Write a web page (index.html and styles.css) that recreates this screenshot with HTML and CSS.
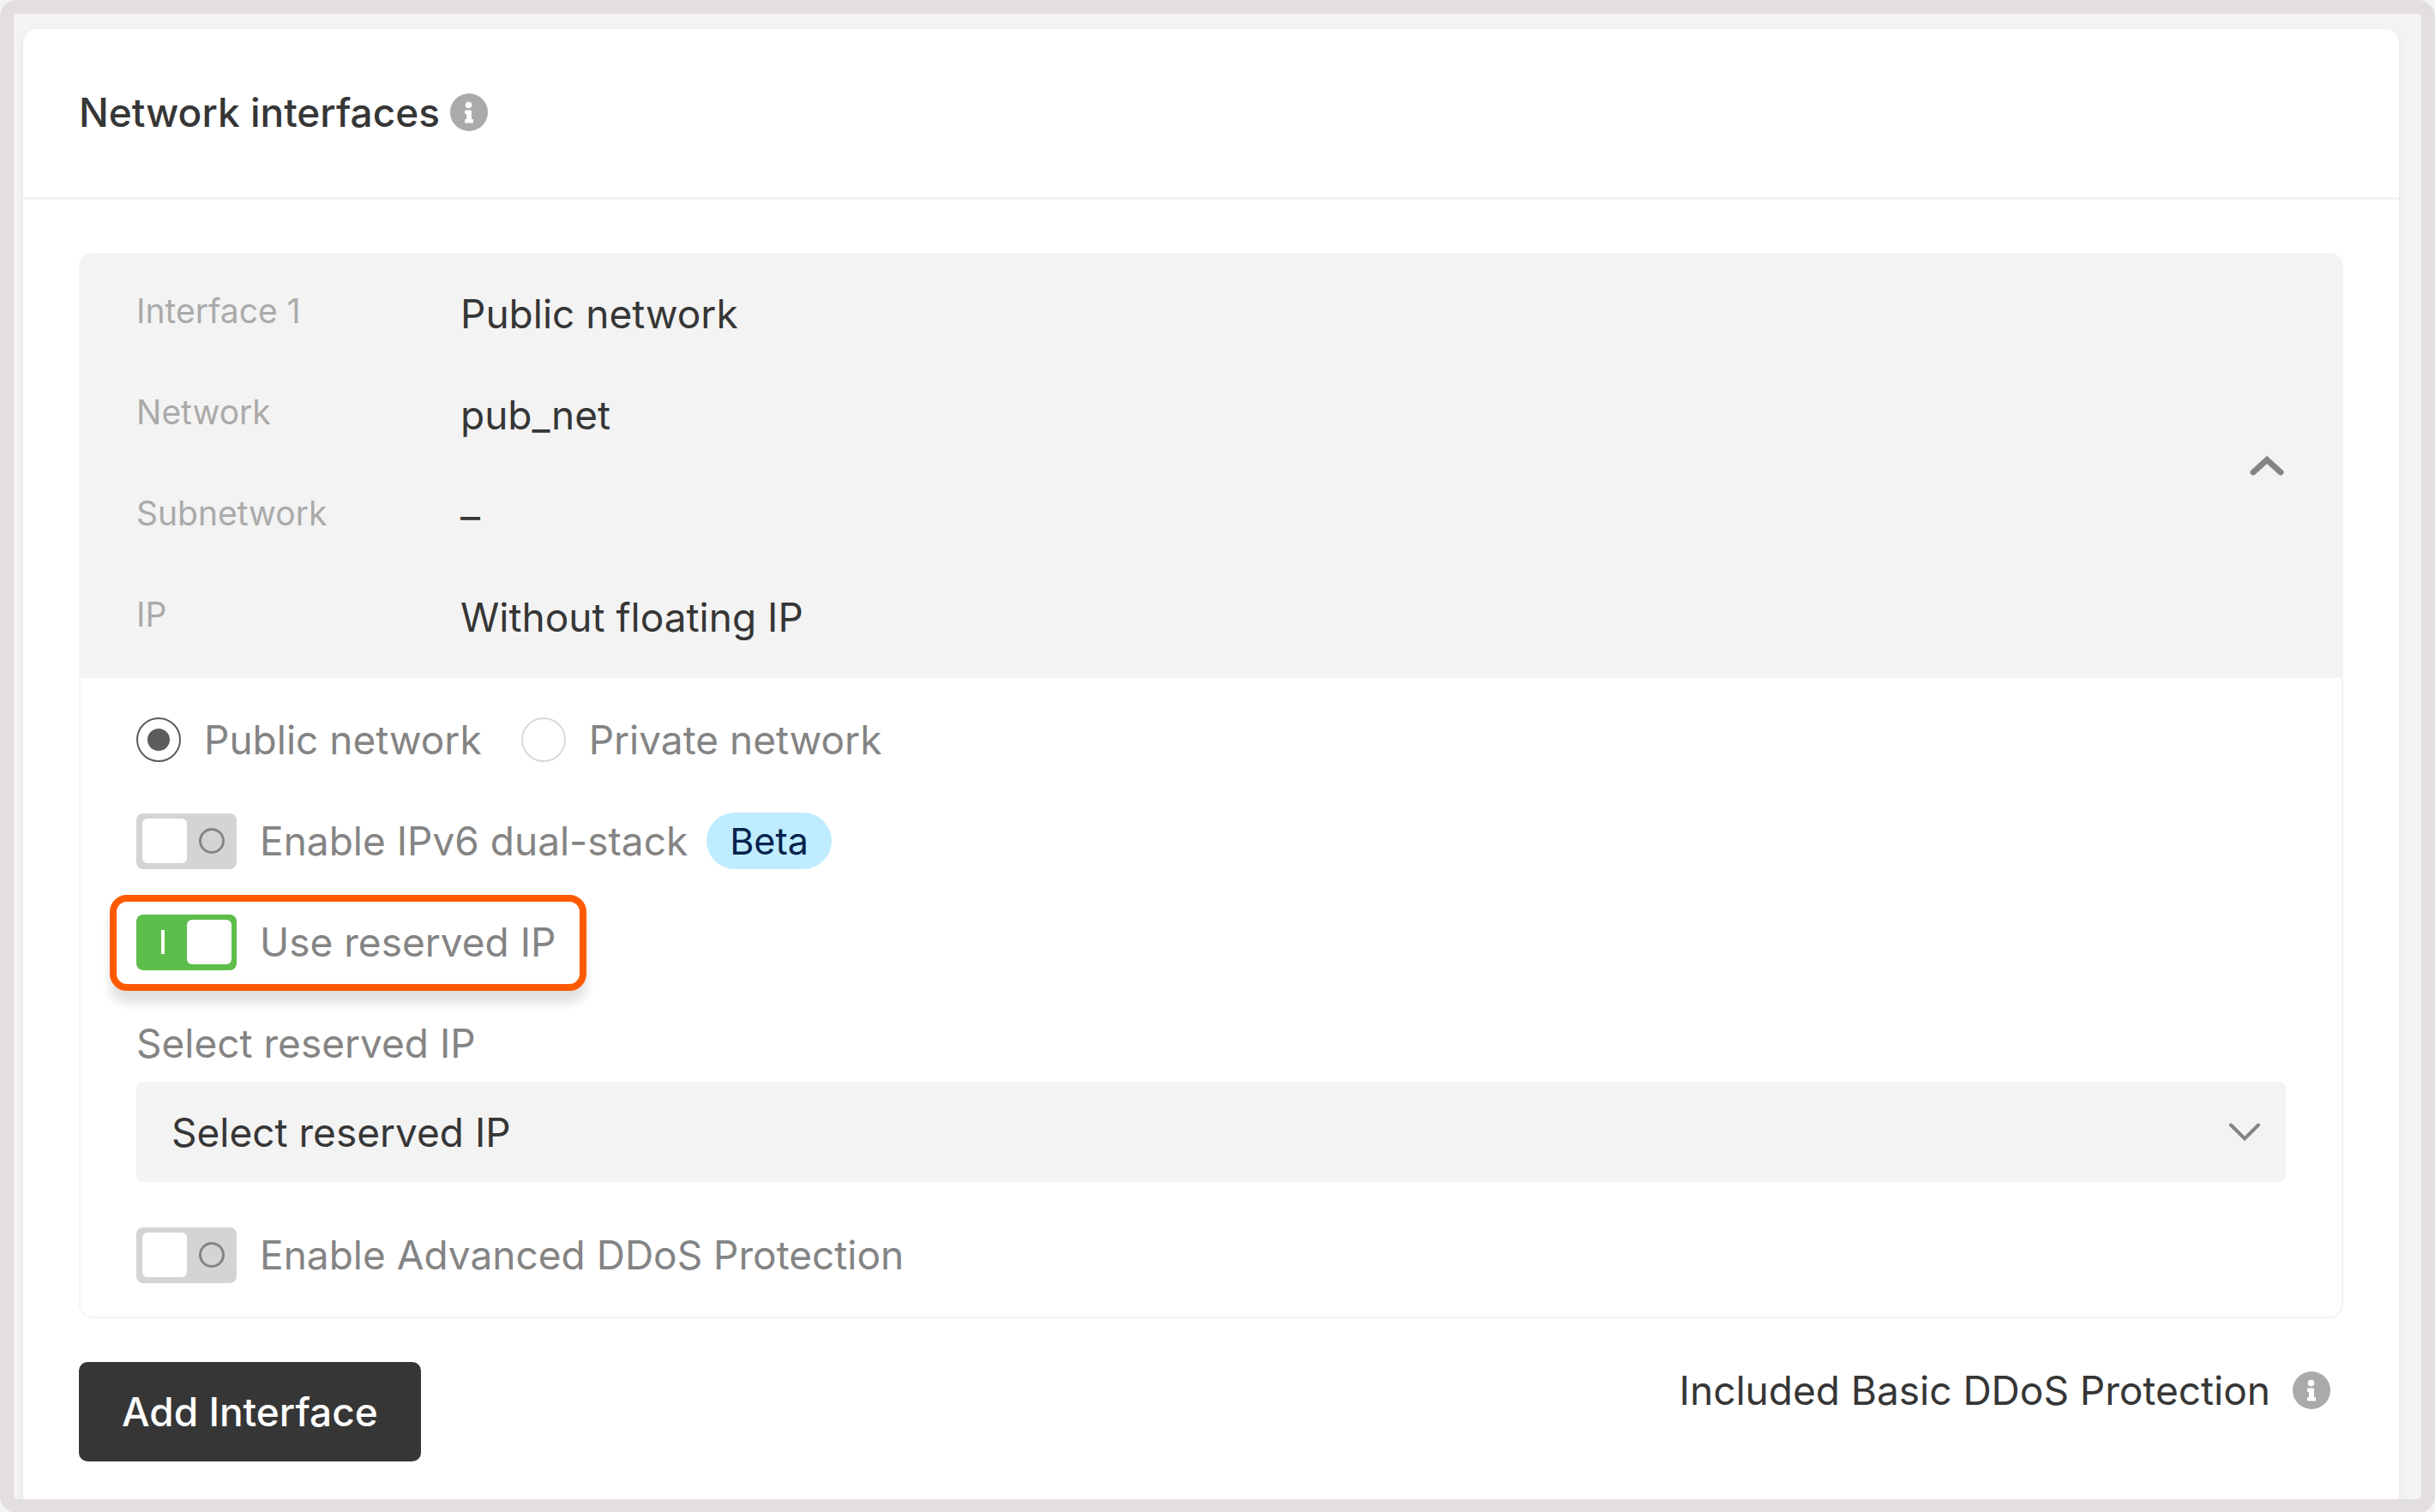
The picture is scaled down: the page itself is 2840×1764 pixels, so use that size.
FILE: index.html
```html
<!DOCTYPE html>
<html lang="en">
<head>
<meta charset="utf-8">
<meta name="viewport" content="width=device-width, initial-scale=1">
<title>Network interfaces</title>
<link rel="stylesheet" href="styles.css">
</head>
<body>
<svg class="sprite" aria-hidden="true">
  <symbol id="info" viewBox="0 0 44 44">
    <circle cx="22" cy="22" r="22" fill="#aaaaaa"/>
    <circle cx="21.500" cy="13.500" r="3.800" fill="#fff"/>
    <path d="M17.500 20h7v10.500h2v3.500h-9v-3.500h2v-7h-2z" fill="#fff" stroke="#fff" stroke-width="1" stroke-linejoin="round"/>
  </symbol>
</svg>
<div class="frame">
  <main class="card">
    <header class="card-header">
      <h1 class="title">Network interfaces</h1>
      <button class="icon-button" type="button" aria-label="About network interfaces"><svg class="info-icon"><use href="#info"/></svg></button>
    </header>
    <form class="card-body">
      <section class="panel">
        <div class="summary">
          <dl class="details">
            <dt>Interface 1</dt><dd>Public network</dd>
            <dt>Network</dt><dd>pub_net</dd>
            <dt>Subnetwork</dt><dd>–</dd>
            <dt>IP</dt><dd>Without floating IP</dd>
          </dl>
          <button class="icon-button" type="button" aria-label="Collapse interface" aria-expanded="true">
            <svg class="collapse-icon" viewBox="0 0 40 26"><path d="M4 21 20 6.500 36 21" fill="none" stroke="#848484" stroke-width="7" stroke-linecap="round" stroke-linejoin="miter"/></svg>
          </button>
        </div>
        <div class="settings">
          <div class="row radios">
            <label class="option"><input class="radio" type="radio" name="net" checked>Public network</label>
            <label class="option"><input class="radio" type="radio" name="net">Private network</label>
          </div>
          <div class="row">
            <label class="toggle"><input class="switch" type="checkbox" role="switch">Enable IPv6 dual-stack</label>
            <span class="badge">Beta</span>
          </div>
          <div class="row">
            <label class="toggle highlighted"><input class="switch" type="checkbox" role="switch" checked>Use reserved IP</label>
          </div>
          <div class="field">
            <label class="row" for="reserved-ip">Select reserved IP</label>
            <div class="select-box">
              <select class="select" id="reserved-ip"><option>Select reserved IP</option></select>
              <svg class="select-arrow" viewBox="0 0 36 22" aria-hidden="true"><path d="M2 2.500 18 18.500 34 2.500" fill="none" stroke="#848484" stroke-width="4" stroke-linecap="round"/></svg>
            </div>
          </div>
          <div class="row">
            <label class="toggle"><input class="switch" type="checkbox" role="switch">Enable Advanced DDoS Protection</label>
          </div>
        </div>
      </section>
      <div class="actions">
        <button class="add-button" type="button">Add Interface</button>
        <div class="included">
          <span>Included Basic DDoS Protection</span>
          <button class="icon-button" type="button" aria-label="About basic DDoS protection"><svg class="info-icon"><use href="#info"/></svg></button>
        </div>
      </div>
    </form>
  </main>
</div>
</body>
</html>
```
FILE: styles.css
```css
*,
*::before,
*::after {
  box-sizing: border-box;
}

body {
  margin: 0;
  background: #f3f3f3;
  color: #363636;
  font-family: Inter, "Liberation Sans", sans-serif;
  font-size: 46px;
  line-height: 66px;
}

button,
select {
  font: inherit;
  color: inherit;
}

.sprite {
  position: absolute;
  width: 0;
  height: 0;
}

.frame {
  display: flex;
  flex-direction: column;
  min-height: 100vh;
  padding: 18px 26px 0 11px;
  border: 16px solid #e3dfde;
  border-radius: 20px;
}

.card {
  flex: 1;
  background: #fff;
  border-radius: 16px 16px 0 0;
  box-shadow: 0 4px 12px rgba(0, 0, 0, 0.06);
  clip-path: inset(-16px -24px 0 -11px);
}

.card-header {
  display: flex;
  align-items: center;
  gap: 12px;
  padding: 64px 65px 66px;
  border-bottom: 3px solid #f3f3f3;
}

.title {
  margin: 0;
  font-size: inherit;
  font-weight: 500;
}

.icon-button {
  display: flex;
  padding: 0;
  border: 0;
  background: none;
  cursor: pointer;
}

.info-icon {
  width: 44px;
  height: 44px;
}

.card-body {
  padding: 62px 65px 44px;
}

.panel {
  border: 2px solid #f3f3f3;
  border-radius: 16px;
}

.summary {
  display: flex;
  align-items: center;
  justify-content: space-between;
  padding: 36px 67px 38px 65px;
  background: #f3f3f3;
  border-radius: 14px 14px 0 0;
}

.details {
  display: grid;
  grid-template-columns: 378px auto;
  row-gap: 52px;
  margin: 0;
}

.details dt {
  color: #aaa;
  font-size: 39px;
  line-height: 60px;
}

.details dd {
  margin: 0;
}

.collapse-icon {
  width: 40px;
  height: 26px;
}

.settings {
  display: flex;
  flex-direction: column;
  gap: 52px;
  padding: 39px 65px;
  color: #848484;
}

.row {
  display: flex;
  align-items: center;
  gap: 22px;
}

.radios {
  gap: 46px;
}

.option,
.toggle {
  display: flex;
  align-items: center;
  gap: 27px;
}

.radio {
  appearance: none;
  display: grid;
  place-items: center;
  width: 52px;
  height: 52px;
  margin: 0;
  border: 2px solid #d9d9d9;
  border-radius: 50%;
}

.radio:checked {
  border-color: #5c5c5c;
}

.radio:checked::before {
  content: "";
  width: 26px;
  height: 26px;
  border-radius: 50%;
  background: #5c5c5c;
}

.switch {
  appearance: none;
  display: flex;
  align-items: center;
  justify-content: space-between;
  width: 117px;
  height: 65px;
  margin: 0;
  padding: 0 14px 0 7px;
  border-radius: 8px;
  background: #d4d4d4;
}

.switch::before {
  content: "";
  width: 52px;
  height: 52px;
  border-radius: 6px;
  background: #fff;
}

.switch::after {
  content: "";
  width: 30px;
  height: 30px;
  border: 3px solid #848484;
  border-radius: 50%;
}

.switch:checked {
  flex-direction: row-reverse;
  padding: 0 6px 0 29px;
  background: #5dbe4b;
}

.switch:checked::after {
  width: 4px;
  height: 28px;
  border: 0;
  border-radius: 0;
  background: #fff;
}

.highlighted {
  position: relative;
}

.highlighted::after {
  content: "";
  position: absolute;
  inset: -22px -36px -24px -31px;
  border: 8px solid #ff5a00;
  border-radius: 20px;
  box-shadow: 0 14px 12px rgba(0, 0, 0, 0.12);
  pointer-events: none;
}

.badge {
  padding: 0 27px;
  border-radius: 33px;
  background: #bfecff;
  color: #03234d;
  font-size: 43px;
}

.field {
  display: flex;
  flex-direction: column;
  gap: 12px;
}

.select-box {
  display: grid;
  align-items: center;
}

.select {
  grid-area: 1 / 1;
  appearance: none;
  width: 100%;
  height: 117px;
  padding: 0 96px 0 41px;
  border: 0;
  border-radius: 8px;
  background: #f3f3f3;
  color: #363636;
}

.select-arrow {
  grid-area: 1 / 1;
  justify-self: end;
  width: 36px;
  height: 22px;
  margin-right: 30px;
  pointer-events: none;
}

.actions {
  display: flex;
  align-items: flex-start;
  justify-content: space-between;
  padding-top: 51px;
}

.add-button {
  padding: 25px 50px;
  border: 0;
  border-radius: 10px;
  background: #363636;
  color: #fff;
  font-weight: 500;
}

.included {
  display: flex;
  align-items: center;
  gap: 26px;
  padding-right: 15px;
}
```
